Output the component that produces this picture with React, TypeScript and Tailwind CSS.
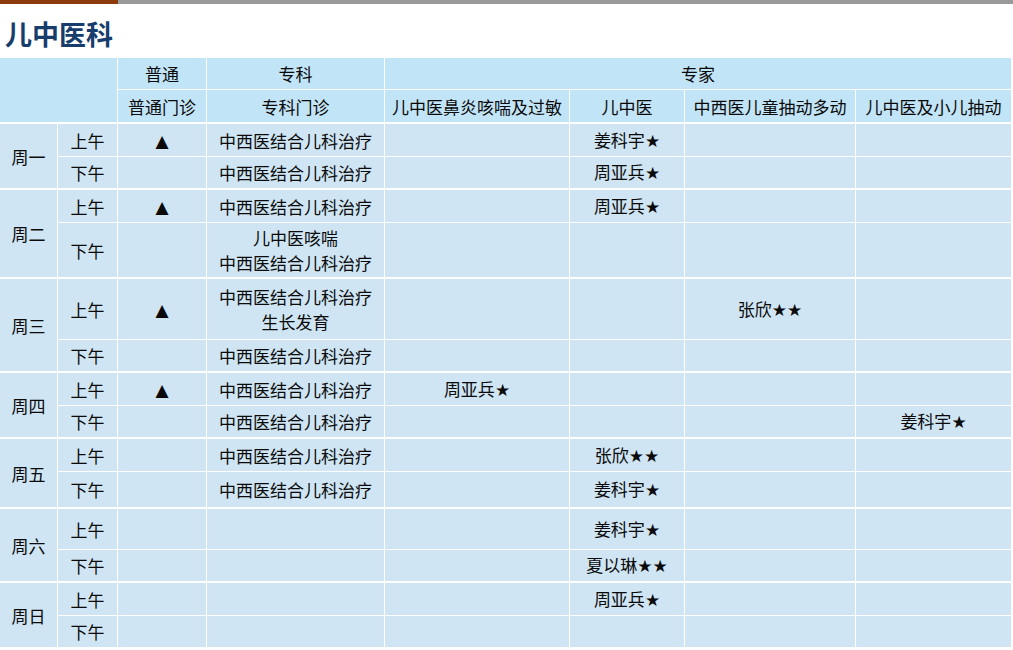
import React from "react";

type Row = { half: string; cells: string[]; };
type Group = { day: string; rows: [Row, Row] };

const groups: Group[] = [
  { day: "周一", rows: [
    { half: "上午", cells: ["▲", "中西医结合儿科治疗", "", "姜科宇★", "", ""] },
    { half: "下午", cells: ["", "中西医结合儿科治疗", "", "周亚兵★", "", ""] },
  ]},
  { day: "周二", rows: [
    { half: "上午", cells: ["▲", "中西医结合儿科治疗", "", "周亚兵★", "", ""] },
    { half: "下午", cells: ["", "儿中医咳喘\n中西医结合儿科治疗", "", "", "", ""] },
  ]},
  { day: "周三", rows: [
    { half: "上午", cells: ["▲", "中西医结合儿科治疗\n生长发育", "", "", "张欣★★", ""] },
    { half: "下午", cells: ["", "中西医结合儿科治疗", "", "", "", ""] },
  ]},
  { day: "周四", rows: [
    { half: "上午", cells: ["▲", "中西医结合儿科治疗", "周亚兵★", "", "", ""] },
    { half: "下午", cells: ["", "中西医结合儿科治疗", "", "", "", "姜科宇★"] },
  ]},
  { day: "周五", rows: [
    { half: "上午", cells: ["", "中西医结合儿科治疗", "", "张欣★★", "", ""] },
    { half: "下午", cells: ["", "中西医结合儿科治疗", "", "姜科宇★", "", ""] },
  ]},
  { day: "周六", rows: [
    { half: "上午", cells: ["", "", "", "姜科宇★", "", ""] },
    { half: "下午", cells: ["", "", "", "夏以琳★★", "", ""] },
  ]},
  { day: "周日", rows: [
    { half: "上午", cells: ["", "", "", "周亚兵★", "", ""] },
    { half: "下午", cells: ["", "", "", "", "", ""] },
  ]},
];

function Text({ s }: { s: string }) {
  const lines = s.split("\n");
  return (
    <div className="flex flex-col items-center">
      {lines.map((line, i) => {
        const parts = line.split(/([★▲]+)/);
        return (
          <div key={i} className="whitespace-nowrap">
            {parts.map((p, j) =>
              /[★▲]/.test(p) ? (
                <span key={j} className="font-['DejaVu_Sans',sans-serif] text-[17px]">{p}</span>
              ) : (
                <span key={j}>{p}</span>
              )
            )}
          </div>
        );
      })}
    </div>
  );
}

const hdr = "bg-[#c2e4f7] border-r border-white flex items-center justify-center";
const body = "bg-[#cfe5f3] border-r border-white flex items-center justify-center";

export default function App() {
  return (
    <div className="w-[1013px] h-[650px] bg-white overflow-hidden font-['Noto_Sans_CJK_SC','Noto_Sans',sans-serif] text-[17px] leading-[25px] text-[#0a0a0a]">
      <div className="flex h-[4px]">
        <div className="w-[118px] bg-[#8c3a0c]" />
        <div className="flex-1 bg-[#9a9a9a]" />
      </div>
      <div className="h-[54px] flex items-center pl-[5px] pt-[4px]">
        <h1 className="text-[27px] font-bold text-[#173d6c] leading-none">儿中医科</h1>
      </div>
      <div className="grid grid-cols-[58px_60px_89px_178px_185px_115px_171px_156px] grid-rows-[32px_34px_33px_33px_33px_56px_61px_33px_33px_33px_33px_37px_41px_33px_33px_33px]">
        <div className={`${hdr} col-span-2 row-span-2 border-b-2`} />
        <div className={`${hdr} border-b`}>普通</div>
        <div className={`${hdr} border-b`}>专科</div>
        <div className={`${hdr} col-span-4 border-b`}>专家</div>
        <div className={`${hdr} border-b-2`}>普通门诊</div>
        <div className={`${hdr} border-b-2`}>专科门诊</div>
        <div className={`${hdr} border-b-2`}>儿中医鼻炎咳喘及过敏</div>
        <div className={`${hdr} border-b-2`}>儿中医</div>
        <div className={`${hdr} border-b-2`}>中西医儿童抽动多动</div>
        <div className={`${hdr} border-b-2`}>儿中医及小儿抽动</div>
        {groups.map((g) => (
          <React.Fragment key={g.day}>
            <div className={`${body} row-span-2 border-b-2`}>{g.day}</div>
            <div className={`${body} border-b`}>{g.rows[0].half}</div>
            {g.rows[0].cells.map((c, i) => (
              <div key={"a" + i} className={`${body} border-b`}>{c && <Text s={c} />}</div>
            ))}
            <div className={`${body} border-b-2`}>{g.rows[1].half}</div>
            {g.rows[1].cells.map((c, i) => (
              <div key={"b" + i} className={`${body} border-b-2`}>{c && <Text s={c} />}</div>
            ))}
          </React.Fragment>
        ))}
      </div>
    </div>
  );
}
